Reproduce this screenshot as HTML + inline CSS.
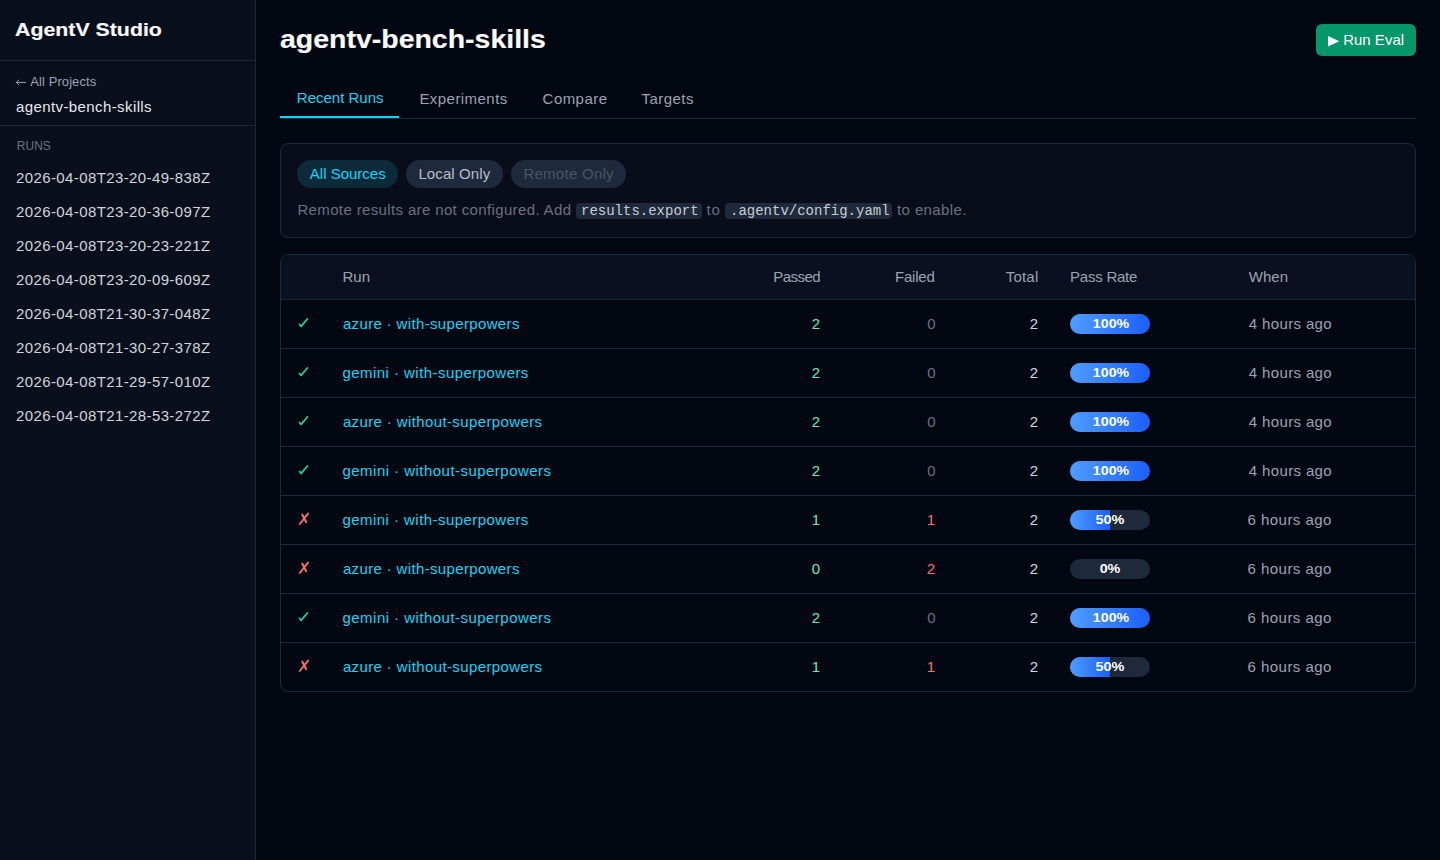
<!DOCTYPE html>
<html><head><meta charset="utf-8"><title>AgentV Studio</title>
<style>
html,body{margin:0;padding:0;}
body{width:1440px;height:860px;overflow:hidden;background:#030712;font-family:"Liberation Sans", sans-serif;font-size:14px;color:#e5e7eb;position:relative;}
.t{position:absolute;white-space:nowrap;line-height:20px;}
</style></head><body>
<div style="position:absolute;left:0;top:0;width:255px;height:860px;background:#0a0f1c;"></div>
<div style="position:absolute;left:255px;top:0;width:1px;height:860px;background:#1f2937;"></div>
<div style="position:absolute;left:0;top:60px;width:255px;height:1px;background:#1f2937;"></div>
<div style="position:absolute;left:0;top:125px;width:255px;height:1px;background:#1f2937;"></div>
<svg style="position:absolute;left:12px;top:74px" width="20" height="16" viewBox="0 0 20 16"><path d="M4.3 8.4 H13.6 M6.8 6.1 L4.3 8.4 L6.8 10.7" fill="none" stroke="#9ca3af" stroke-width="1.0" stroke-linecap="round" stroke-linejoin="round"/></svg>
<div style="position:absolute;left:1316px;top:24px;width:100px;height:32px;border-radius:6px;background:#059669;"></div>
<svg style="position:absolute;left:1327.5px;top:36px" width="12" height="11" viewBox="0 0 12 11"><path d="M0 0 L11.3 5.3 L0 10.6 Z" fill="#fff"/></svg>
<div style="position:absolute;left:280px;top:118px;width:1136px;height:1px;background:#1f2937;"></div>
<div style="position:absolute;left:280px;top:116px;width:119px;height:2px;background:#14d4f4;"></div>
<div style="position:absolute;left:280px;top:143px;width:1136px;height:95px;border:1px solid #1f2937;border-radius:8px;background:#080d19;box-sizing:border-box;"></div>
<div style="position:absolute;left:297px;top:160px;width:101px;height:28px;border-radius:14px;background:#0c2a3a;"></div>
<div style="position:absolute;left:406px;top:160px;width:97px;height:28px;border-radius:14px;background:#1e293b;"></div>
<div style="position:absolute;left:511px;top:160px;width:115px;height:28px;border-radius:14px;background:#1e293b;"></div>
<div style="position:absolute;left:576px;top:203px;width:126px;height:16px;border-radius:4px;background:#1e293b;"></div>
<div style="position:absolute;left:725px;top:203px;width:167px;height:16px;border-radius:4px;background:#1e293b;"></div>
<div style="position:absolute;left:280px;top:254px;width:1136px;height:438px;border:1px solid #1f2937;border-radius:8px;box-sizing:border-box;"></div>
<div style="position:absolute;left:281px;top:255px;width:1134px;height:44px;border-radius:7px 7px 0 0;background:#0a101f;"></div>
<div style="position:absolute;left:281px;top:299px;width:1134px;height:1px;background:#1f2937;"></div>
<svg style="position:absolute;left:294px;top:314px" width="20" height="20" viewBox="0 0 20 20"><path d="M5.6 10.5 L7.1 12.4 L13.4 5.0" fill="none" stroke="#1fcf8e" stroke-width="1.8" stroke-linecap="round" stroke-linejoin="round"/></svg>
<div style="position:absolute;left:1070px;top:314px;width:80px;height:20px;border-radius:10px;background:#1e293b;overflow:hidden;"><div style="position:absolute;left:0;top:0;bottom:0;width:80px;background:linear-gradient(90deg,#4f9dff,#1b5ff8);"></div></div>
<div style="position:absolute;left:281px;top:348px;width:1134px;height:1px;background:#1f2937;"></div>
<svg style="position:absolute;left:294px;top:363px" width="20" height="20" viewBox="0 0 20 20"><path d="M5.6 10.5 L7.1 12.4 L13.4 5.0" fill="none" stroke="#1fcf8e" stroke-width="1.8" stroke-linecap="round" stroke-linejoin="round"/></svg>
<div style="position:absolute;left:1070px;top:363px;width:80px;height:20px;border-radius:10px;background:#1e293b;overflow:hidden;"><div style="position:absolute;left:0;top:0;bottom:0;width:80px;background:linear-gradient(90deg,#4f9dff,#1b5ff8);"></div></div>
<div style="position:absolute;left:281px;top:397px;width:1134px;height:1px;background:#1f2937;"></div>
<svg style="position:absolute;left:294px;top:412px" width="20" height="20" viewBox="0 0 20 20"><path d="M5.6 10.5 L7.1 12.4 L13.4 5.0" fill="none" stroke="#1fcf8e" stroke-width="1.8" stroke-linecap="round" stroke-linejoin="round"/></svg>
<div style="position:absolute;left:1070px;top:412px;width:80px;height:20px;border-radius:10px;background:#1e293b;overflow:hidden;"><div style="position:absolute;left:0;top:0;bottom:0;width:80px;background:linear-gradient(90deg,#4f9dff,#1b5ff8);"></div></div>
<div style="position:absolute;left:281px;top:446px;width:1134px;height:1px;background:#1f2937;"></div>
<svg style="position:absolute;left:294px;top:461px" width="20" height="20" viewBox="0 0 20 20"><path d="M5.6 10.5 L7.1 12.4 L13.4 5.0" fill="none" stroke="#1fcf8e" stroke-width="1.8" stroke-linecap="round" stroke-linejoin="round"/></svg>
<div style="position:absolute;left:1070px;top:461px;width:80px;height:20px;border-radius:10px;background:#1e293b;overflow:hidden;"><div style="position:absolute;left:0;top:0;bottom:0;width:80px;background:linear-gradient(90deg,#4f9dff,#1b5ff8);"></div></div>
<div style="position:absolute;left:281px;top:495px;width:1134px;height:1px;background:#1f2937;"></div>
<svg style="position:absolute;left:294px;top:510px" width="20" height="20" viewBox="0 0 20 20"><path d="M5.8 14.0 L14.0 3.6 M8.2 4.5 L12.2 12.2" fill="none" stroke="#f87171" stroke-width="1.9" stroke-linecap="round"/></svg>
<div style="position:absolute;left:1070px;top:510px;width:80px;height:20px;border-radius:10px;background:#1e293b;overflow:hidden;"><div style="position:absolute;left:0;top:0;bottom:0;width:40px;background:linear-gradient(90deg,#4f9dff,#1b5ff8);"></div></div>
<div style="position:absolute;left:281px;top:544px;width:1134px;height:1px;background:#1f2937;"></div>
<svg style="position:absolute;left:294px;top:559px" width="20" height="20" viewBox="0 0 20 20"><path d="M5.8 14.0 L14.0 3.6 M8.2 4.5 L12.2 12.2" fill="none" stroke="#f87171" stroke-width="1.9" stroke-linecap="round"/></svg>
<div style="position:absolute;left:1070px;top:559px;width:80px;height:20px;border-radius:10px;background:#1e293b;overflow:hidden;"><div style="position:absolute;left:0;top:0;bottom:0;width:0px;background:linear-gradient(90deg,#4f9dff,#1b5ff8);"></div></div>
<div style="position:absolute;left:281px;top:593px;width:1134px;height:1px;background:#1f2937;"></div>
<svg style="position:absolute;left:294px;top:608px" width="20" height="20" viewBox="0 0 20 20"><path d="M5.6 10.5 L7.1 12.4 L13.4 5.0" fill="none" stroke="#1fcf8e" stroke-width="1.8" stroke-linecap="round" stroke-linejoin="round"/></svg>
<div style="position:absolute;left:1070px;top:608px;width:80px;height:20px;border-radius:10px;background:#1e293b;overflow:hidden;"><div style="position:absolute;left:0;top:0;bottom:0;width:80px;background:linear-gradient(90deg,#4f9dff,#1b5ff8);"></div></div>
<div style="position:absolute;left:281px;top:642px;width:1134px;height:1px;background:#1f2937;"></div>
<svg style="position:absolute;left:294px;top:657px" width="20" height="20" viewBox="0 0 20 20"><path d="M5.8 14.0 L14.0 3.6 M8.2 4.5 L12.2 12.2" fill="none" stroke="#f87171" stroke-width="1.9" stroke-linecap="round"/></svg>
<div style="position:absolute;left:1070px;top:657px;width:80px;height:20px;border-radius:10px;background:#1e293b;overflow:hidden;"><div style="position:absolute;left:0;top:0;bottom:0;width:40px;background:linear-gradient(90deg,#4f9dff,#1b5ff8);"></div></div>
<div class="t" id="brand" style="top:20.00px;left:15.20px;font-size:19px;transform:scaleX(1.1221);transform-origin:left top;color:#f9fafb;font-weight:700;-webkit-text-stroke:0.18px currentColor">AgentV Studio</div>
<div class="t" id="allproj" style="top:72.00px;left:30.27px;font-size:13px;letter-spacing:0.082px;color:#9ca3af">All Projects</div>
<div class="t" id="proj" style="top:97.00px;left:16.00px;font-size:15px;letter-spacing:0.400px;color:#e5e7eb">agentv-bench-skills</div>
<div class="t" id="runs" style="top:136.00px;left:16.80px;font-size:12px;color:#6b7280">RUNS</div>
<div class="t" id="run0" style="top:168.00px;left:16.00px;font-size:15px;letter-spacing:0.391px;color:#d1d5db">2026-04-08T23-20-49-838Z</div>
<div class="t" id="run1" style="top:202.00px;left:16.00px;font-size:15px;letter-spacing:0.391px;color:#d1d5db">2026-04-08T23-20-36-097Z</div>
<div class="t" id="run2" style="top:236.00px;left:16.00px;font-size:15px;letter-spacing:0.391px;color:#d1d5db">2026-04-08T23-20-23-221Z</div>
<div class="t" id="run3" style="top:270.00px;left:16.00px;font-size:15px;letter-spacing:0.391px;color:#d1d5db">2026-04-08T23-20-09-609Z</div>
<div class="t" id="run4" style="top:304.00px;left:16.00px;font-size:15px;letter-spacing:0.391px;color:#d1d5db">2026-04-08T21-30-37-048Z</div>
<div class="t" id="run5" style="top:338.00px;left:16.00px;font-size:15px;letter-spacing:0.391px;color:#d1d5db">2026-04-08T21-30-27-378Z</div>
<div class="t" id="run6" style="top:372.00px;left:16.00px;font-size:15px;letter-spacing:0.391px;color:#d1d5db">2026-04-08T21-29-57-010Z</div>
<div class="t" id="run7" style="top:406.00px;left:16.00px;font-size:15px;letter-spacing:0.391px;color:#d1d5db">2026-04-08T21-28-53-272Z</div>
<div class="t" id="title" style="top:24.00px;left:280.40px;font-size:26px;transform:scaleX(1.0950);transform-origin:left top;line-height:30px;color:#f9fafb;font-weight:700;-webkit-text-stroke:0.18px currentColor">agentv-bench-skills</div>
<div class="t" id="runeval" style="top:30.00px;left:1343.20px;font-size:15px;color:#ffffff">Run Eval</div>
<div class="t" id="tab1" style="top:88.00px;left:296.80px;font-size:15px;color:#14d4f4">Recent Runs</div>
<div class="t" id="tab2" style="top:89.00px;left:419.40px;font-size:15px;letter-spacing:0.450px;color:#9ca3af">Experiments</div>
<div class="t" id="tab3" style="top:89.00px;left:542.60px;font-size:15px;letter-spacing:0.450px;color:#9ca3af">Compare</div>
<div class="t" id="tab4" style="top:89.00px;left:641.60px;font-size:15px;letter-spacing:0.450px;color:#9ca3af">Targets</div>
<div class="t" id="pill1" style="top:164.00px;left:309.80px;font-size:15px;color:#14d4f4">All Sources</div>
<div class="t" id="pill2" style="top:164.00px;left:418.40px;font-size:15px;letter-spacing:0.100px;color:#b8bec7">Local Only</div>
<div class="t" id="pill3" style="top:164.00px;left:523.40px;font-size:15px;letter-spacing:0.270px;color:#4b5563">Remote Only</div>
<div class="t" id="desc1" style="top:200.00px;left:297.40px;font-size:15px;letter-spacing:0.365px;color:#6b7280">Remote results are not configured. Add</div>
<div class="t" id="desc2" style="top:200.00px;left:706.40px;font-size:15px;letter-spacing:0.900px;color:#6b7280">to</div>
<div class="t" id="desc3" style="top:200.00px;left:897.00px;font-size:15px;letter-spacing:0.400px;color:#6b7280">to enable.</div>
<div class="t" style="left:581px;top:201px;font-family:'Liberation Mono',monospace;font-size:14px;color:#c8cdd5;letter-spacing:0">results.export</div>
<div class="t" style="left:730px;top:201px;font-family:'Liberation Mono',monospace;font-size:14px;color:#c8cdd5;letter-spacing:0">.agentv/config.yaml</div>
<div class="t" id="h1" style="top:267.00px;left:342.50px;font-size:15px;color:#9ca3af">Run</div>
<div class="t" id="h2" style="top:267.00px;right:619.90px;font-size:15px;letter-spacing:-0.540px;color:#9ca3af">Passed</div>
<div class="t" id="h3" style="top:267.00px;right:505.30px;font-size:15px;letter-spacing:-0.180px;color:#9ca3af">Failed</div>
<div class="t" id="h4" style="top:267.00px;right:401.50px;font-size:15px;letter-spacing:0.225px;color:#9ca3af">Total</div>
<div class="t" id="h5" style="top:267.00px;left:1070.00px;font-size:15px;letter-spacing:-0.225px;color:#9ca3af">Pass Rate</div>
<div class="t" id="h6" style="top:267.00px;left:1248.80px;font-size:15px;color:#9ca3af">When</div>
<div class="t" id="name0" style="top:314.00px;left:342.90px;font-size:15px;letter-spacing:0.352px;color:#14d4f4">azure · with-superpowers</div>
<div class="t" id="p0" style="top:314.00px;right:619.90px;font-size:15px;color:#6ee7b7">2</div>
<div class="t" id="f0" style="top:314.00px;right:504.50px;font-size:15px;color:#6b7280">0</div>
<div class="t" id="tot0" style="top:314.00px;right:401.90px;font-size:15px;color:#d1d5db">2</div>
<div class="t" id="pct0" style="top:314.00px;left:1071.20px;font-size:13px;transform:scaleX(1.0909);transform-origin:center top;color:#ffffff;font-weight:700;width:80px;text-align:center">100%</div>
<div class="t" id="when0" style="top:314.00px;left:1248.80px;font-size:15px;letter-spacing:0.360px;color:#9ca3af">4 hours ago</div>
<div class="t" id="name1" style="top:363.00px;left:342.50px;font-size:15px;letter-spacing:0.450px;color:#14d4f4">gemini · with-superpowers</div>
<div class="t" id="p1" style="top:363.00px;right:619.90px;font-size:15px;color:#6ee7b7">2</div>
<div class="t" id="f1" style="top:363.00px;right:504.50px;font-size:15px;color:#6b7280">0</div>
<div class="t" id="tot1" style="top:363.00px;right:401.90px;font-size:15px;color:#d1d5db">2</div>
<div class="t" id="pct1" style="top:363.00px;left:1071.20px;font-size:13px;transform:scaleX(1.0909);transform-origin:center top;color:#ffffff;font-weight:700;width:80px;text-align:center">100%</div>
<div class="t" id="when1" style="top:363.00px;left:1248.80px;font-size:15px;letter-spacing:0.360px;color:#9ca3af">4 hours ago</div>
<div class="t" id="name2" style="top:412.00px;left:342.90px;font-size:15px;letter-spacing:0.381px;color:#14d4f4">azure · without-superpowers</div>
<div class="t" id="p2" style="top:412.00px;right:619.90px;font-size:15px;color:#6ee7b7">2</div>
<div class="t" id="f2" style="top:412.00px;right:504.50px;font-size:15px;color:#6b7280">0</div>
<div class="t" id="tot2" style="top:412.00px;right:401.90px;font-size:15px;color:#d1d5db">2</div>
<div class="t" id="pct2" style="top:412.00px;left:1071.20px;font-size:13px;transform:scaleX(1.0909);transform-origin:center top;color:#ffffff;font-weight:700;width:80px;text-align:center">100%</div>
<div class="t" id="when2" style="top:412.00px;left:1248.80px;font-size:15px;letter-spacing:0.360px;color:#9ca3af">4 hours ago</div>
<div class="t" id="name3" style="top:461.00px;left:342.50px;font-size:15px;letter-spacing:0.467px;color:#14d4f4">gemini · without-superpowers</div>
<div class="t" id="p3" style="top:461.00px;right:619.90px;font-size:15px;color:#6ee7b7">2</div>
<div class="t" id="f3" style="top:461.00px;right:504.50px;font-size:15px;color:#6b7280">0</div>
<div class="t" id="tot3" style="top:461.00px;right:401.90px;font-size:15px;color:#d1d5db">2</div>
<div class="t" id="pct3" style="top:461.00px;left:1071.20px;font-size:13px;transform:scaleX(1.0909);transform-origin:center top;color:#ffffff;font-weight:700;width:80px;text-align:center">100%</div>
<div class="t" id="when3" style="top:461.00px;left:1248.80px;font-size:15px;letter-spacing:0.360px;color:#9ca3af">4 hours ago</div>
<div class="t" id="name4" style="top:510.00px;left:342.50px;font-size:15px;letter-spacing:0.450px;color:#14d4f4">gemini · with-superpowers</div>
<div class="t" id="p4" style="top:510.00px;right:619.90px;font-size:15px;color:#6ee7b7">1</div>
<div class="t" id="f4" style="top:510.00px;right:504.90px;font-size:15px;color:#f87171">1</div>
<div class="t" id="tot4" style="top:510.00px;right:401.90px;font-size:15px;color:#d1d5db">2</div>
<div class="t" id="pct4" style="top:510.00px;left:1070.40px;font-size:13px;transform:scaleX(1.1124);transform-origin:center top;color:#ffffff;font-weight:700;width:80px;text-align:center">50%</div>
<div class="t" id="when4" style="top:510.00px;left:1247.60px;font-size:15px;letter-spacing:0.450px;color:#9ca3af">6 hours ago</div>
<div class="t" id="name5" style="top:559.00px;left:342.90px;font-size:15px;letter-spacing:0.352px;color:#14d4f4">azure · with-superpowers</div>
<div class="t" id="p5" style="top:559.00px;right:619.90px;font-size:15px;color:#6ee7b7">0</div>
<div class="t" id="f5" style="top:559.00px;right:504.90px;font-size:15px;color:#f87171">2</div>
<div class="t" id="tot5" style="top:559.00px;right:401.90px;font-size:15px;color:#d1d5db">2</div>
<div class="t" id="pct5" style="top:559.00px;left:1070.00px;font-size:13px;transform:scaleX(1.1025);transform-origin:center top;color:#ffffff;font-weight:700;width:80px;text-align:center">0%</div>
<div class="t" id="when5" style="top:559.00px;left:1247.60px;font-size:15px;letter-spacing:0.450px;color:#9ca3af">6 hours ago</div>
<div class="t" id="name6" style="top:608.00px;left:342.50px;font-size:15px;letter-spacing:0.467px;color:#14d4f4">gemini · without-superpowers</div>
<div class="t" id="p6" style="top:608.00px;right:619.90px;font-size:15px;color:#6ee7b7">2</div>
<div class="t" id="f6" style="top:608.00px;right:504.50px;font-size:15px;color:#6b7280">0</div>
<div class="t" id="tot6" style="top:608.00px;right:401.90px;font-size:15px;color:#d1d5db">2</div>
<div class="t" id="pct6" style="top:608.00px;left:1071.20px;font-size:13px;transform:scaleX(1.0909);transform-origin:center top;color:#ffffff;font-weight:700;width:80px;text-align:center">100%</div>
<div class="t" id="when6" style="top:608.00px;left:1247.60px;font-size:15px;letter-spacing:0.450px;color:#9ca3af">6 hours ago</div>
<div class="t" id="name7" style="top:657.00px;left:342.90px;font-size:15px;letter-spacing:0.381px;color:#14d4f4">azure · without-superpowers</div>
<div class="t" id="p7" style="top:657.00px;right:619.90px;font-size:15px;color:#6ee7b7">1</div>
<div class="t" id="f7" style="top:657.00px;right:504.90px;font-size:15px;color:#f87171">1</div>
<div class="t" id="tot7" style="top:657.00px;right:401.90px;font-size:15px;color:#d1d5db">2</div>
<div class="t" id="pct7" style="top:657.00px;left:1070.40px;font-size:13px;transform:scaleX(1.1124);transform-origin:center top;color:#ffffff;font-weight:700;width:80px;text-align:center">50%</div>
<div class="t" id="when7" style="top:657.00px;left:1247.60px;font-size:15px;letter-spacing:0.450px;color:#9ca3af">6 hours ago</div>
</body></html>
